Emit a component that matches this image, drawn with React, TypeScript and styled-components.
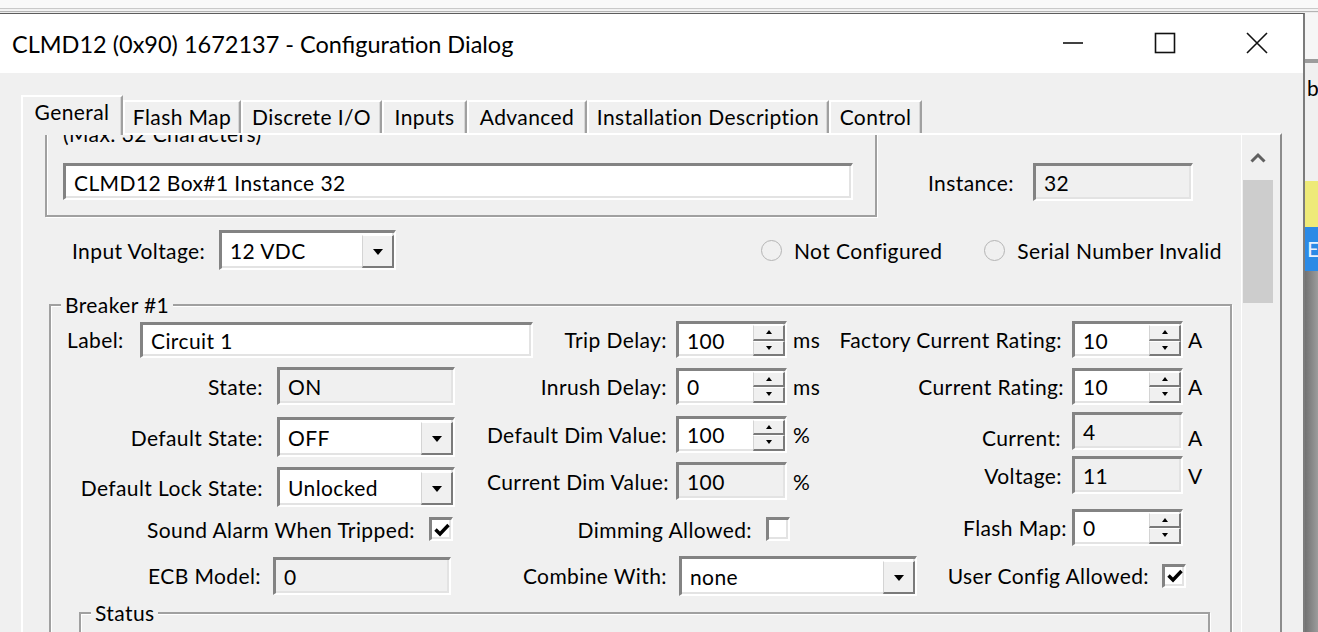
import { useLayoutEffect, useRef } from 'react';
import styled, { createGlobalStyle } from 'styled-components';

const GlobalStyle = createGlobalStyle`
	html, body {
		margin: 0;
		padding: 0;
		background: #f0f0f0;
	}
	body {
		font-family: 'Segoe UI', Lato, sans-serif;
		font-size: 21px;
		letter-spacing: 0.4px;
		color: #000;
	}
	* {
		box-sizing: border-box;
	}
`;

const Screen = styled.div`
	width: 1318px;
	height: 632px;
	overflow: hidden;
	display: flex;
	flex-direction: column;
`;

const TopStrip = styled.div`
	height: 13px;
	flex: none;
	background: linear-gradient(#f9f9f9 0 8px, #c9c9c9 8px 9px, #f2f2f2 9px 11px, #b4b4b4 11px 12px, #ececec 12px);
`;

const Main = styled.div`
	flex: 1;
	min-height: 0;
	display: flex;
`;

const Dialog = styled.div`
	width: 1305px;
	flex: none;
	display: flex;
	flex-direction: column;
	background: #f0f0f0;
	border-top: 1px solid #5c5c5c;
	border-right: 2px solid #7c7c7c;
`;

const TitleBar = styled.div`
	height: 59px;
	flex: none;
	display: flex;
	align-items: center;
	background: #fff;
`;

const Title = styled.div`
	flex: 1;
	padding-left: 12px;
	font-size: 23.5px;
	letter-spacing: 0;
	white-space: nowrap;
`;

const WinButton = styled.div`
	width: 92px;
	height: 100%;
	display: flex;
	align-items: center;
	justify-content: center;
	padding-bottom: 2px;
`;

const Body = styled.div`
	flex: 1;
	min-height: 0;
	display: flex;
	flex-direction: column;
	padding: 22px 21px 0 21px;
`;

const TabStrip = styled.div`
	height: 40px;
	flex: none;
	display: flex;
	align-items: flex-end;
	margin-bottom: -2px;
	position: relative;
	z-index: 1;
`;

const Tab = styled.div<{ $active?: boolean; $w: number }>`
	width: ${(p) => p.$w}px;
	height: ${(p) => (p.$active ? 40 : 33)}px;
	margin-bottom: ${(p) => (p.$active ? 0 : 2)}px;
	padding-top: 3px;
	display: flex;
	justify-content: center;
	line-height: 24px;
	white-space: nowrap;
	background: #f0f0f0;
	border-top: 2px solid #fff;
	border-left: 2px solid #fff;
	border-right: 2px solid #a0a0a0;
	box-shadow: inset -1px 0 0 #d6d6d6;
`;

const Panel = styled.div`
	flex: 1;
	min-height: 0;
	display: flex;
	border-top: 2px solid #fff;
	border-left: 2px solid #fff;
	border-right: 2px solid #8c8c8c;
`;

const Viewport = styled.div`
	flex: 1;
	min-width: 0;
	overflow: hidden;
`;

const ScrollBar = styled.div`
	width: 39px;
	flex: none;
	display: flex;
	flex-direction: column;
	border-left: 1px solid #fff;
	padding: 0 7px 0 1px;
`;

const ScrollUp = styled.div`
	height: 45px;
	display: flex;
	align-items: center;
	justify-content: center;
`;

const ScrollThumb = styled.div`
	height: 123px;
	background: #cdcdcd;
`;

const Content = styled.div`
	padding-top: 20px;
	padding-bottom: 40px;
`;

const TopRow = styled.div`
	display: flex;
	align-items: flex-end;
	padding-left: 22px;
`;

const PlainGroup = styled.div`
	width: 832px;
	border: 2px solid #a0a0a0;
	box-shadow: inset 1px 1px 0 #fff, 1px 1px 0 #fff;
	padding: 11px 22px 15px 16px;
`;

const Hint = styled.div`
	line-height: 26px;
	margin-bottom: 16px;
`;

const InlineField = styled.div<{ $ml: number; $mb?: number }>`
	display: flex;
	align-items: center;
	margin-left: ${(p) => p.$ml}px;
	margin-bottom: ${(p) => p.$mb ?? 0}px;
`;

const Sunken = styled.div<{ $w: number; $h?: number; $ro?: boolean; $ml?: number }>`
	width: ${(p) => p.$w}px;
	height: ${(p) => p.$h ?? 37}px;
	margin-left: ${(p) => p.$ml ?? 0}px;
	flex: none;
	display: flex;
	align-items: center;
	background: ${(p) => (p.$ro ? '#f0f0f0' : '#fff')};
	border-style: solid;
	border-width: 3px 2px 2px 3px;
	border-color: #838383 #fff #fff #838383;
	box-shadow: inset -2px -2px 0 #e3e3e3;
`;

const FieldText = styled.span`
	flex: 1;
	padding-left: 8px;
	white-space: nowrap;
	overflow: hidden;
`;

const Raised = styled.div`
	flex: 1;
	display: flex;
	align-items: center;
	justify-content: center;
	background: #f0f0f0;
	border-style: solid;
	border-width: 1px 2px 2px 1px;
	border-color: #fff #7a7a7a #7a7a7a #d4d4d4;
`;

const DropButton = styled(Raised)`
	flex: none;
	width: 32px;
	align-self: stretch;
	margin: 2px 0 0 0;
	padding-top: 2px;
`;

const SpinColumn = styled.div`
	width: 32px;
	align-self: stretch;
	display: flex;
	flex-direction: column;
	margin-top: 1px;
`;

const Triangle = styled.span<{ $up?: boolean; $half: number; $tall: number }>`
	width: 0;
	height: 0;
	border-left: ${(p) => p.$half}px solid transparent;
	border-right: ${(p) => p.$half}px solid transparent;
	${(p) => (p.$up ? 'border-bottom' : 'border-top')}: ${(p) => p.$tall}px solid #000;
`;

const TextLabel = styled.span<{ $w?: number }>`
	white-space: nowrap;
	${(p) => (p.$w ? `width: ${p.$w}px; flex: none;` : '')}
`;

const VoltageRow = styled.div`
	display: flex;
	align-items: center;
	margin-top: 13px;
	padding-left: 49px;
`;

const Radios = styled.div`
	display: flex;
	align-items: center;
	gap: 42px;
	margin-left: 365px;
`;

const RadioItem = styled.div`
	display: flex;
	align-items: center;
	gap: 12px;
	white-space: nowrap;
`;

const RadioDot = styled.span`
	width: 21px;
	height: 21px;
	border-radius: 50%;
	border: 1.5px solid #b4b4b4;
	flex: none;
`;

const GroupBox = styled.fieldset<{ $w: number; $ml: number; $mt?: number; $minH?: number }>`
	width: ${(p) => p.$w}px;
	margin: ${(p) => p.$mt ?? 0}px 0 0 ${(p) => p.$ml}px;
	min-height: ${(p) => p.$minH ?? 0}px;
	padding: 0 0 16px 16px;
	border: 2px solid #a0a0a0;
	box-shadow: inset 1px 1px 0 #fff, 1px 1px 0 #fff;
	min-width: 0;
`;

const Legend = styled.legend<{ $lh: number }>`
	padding: 0 4px;
	margin-left: -6px;
	line-height: ${(p) => p.$lh}px;
	background: #f0f0f0;
`;

const FormGrid = styled.div`
	display: grid;
	grid-template-columns: 210px 178px 221px 111px 45px 240px 111px 27px;
	grid-template-rows: 45px 48px 54px 46px 38px 55px;
	align-items: center;
`;

const Cell = styled.div<{ $col: string; $end?: boolean; $lift?: number; $pr?: number }>`
	grid-column: ${(p) => p.$col};
	display: flex;
	align-items: center;
	justify-content: ${(p) => (p.$end ? 'flex-end' : 'flex-start')};
	margin-bottom: ${(p) => p.$lift ?? 0}px;
	padding-right: ${(p) => p.$pr ?? 0}px;
	white-space: nowrap;
`;

const Unit = styled.span<{ $pl: number; $lift?: number }>`
	padding-left: ${(p) => p.$pl}px;
	margin-bottom: ${(p) => p.$lift ?? 0}px;
`;

const CheckBox = styled(Sunken)<{ $mr: number }>`
	justify-content: center;
	margin-right: ${(p) => p.$mr}px;
`;

const SideApp = styled.div`
	flex: 1;
	display: flex;
	flex-direction: column;
	overflow: hidden;
`;

const SideBlock = styled.div<{ $h?: number; $bg: string; $fg?: string; $lh?: number }>`
	height: ${(p) => (p.$h ? `${p.$h}px` : 'auto')};
	flex: ${(p) => (p.$h ? 'none' : '1')};
	background: ${(p) => p.$bg};
	color: ${(p) => p.$fg ?? '#000'};
	padding-left: 2px;
	line-height: ${(p) => p.$lh ?? p.$h ?? 20}px;
	overflow: hidden;
`;

const tabs = [
	{ name: 'General', w: 102 },
	{ name: 'Flash Map', w: 118 },
	{ name: 'Discrete I/O', w: 141 },
	{ name: 'Inputs', w: 85 },
	{ name: 'Advanced', w: 120 },
	{ name: 'Installation Description', w: 242 },
	{ name: 'Control', w: 93 },
];

function Combo({ value, w, ml }: { value: string; w: number; ml?: number }) {
	return (
		<Sunken $w={w} $h={40} $ml={ml}>
			<FieldText>{value}</FieldText>
			<DropButton>
				<Triangle $half={5.5} $tall={6} />
			</DropButton>
		</Sunken>
	);
}

function Spin({ value }: { value: string }) {
	return (
		<Sunken $w={111}>
			<FieldText>{value}</FieldText>
			<SpinColumn>
				<Raised>
					<Triangle $up $half={3.5} $tall={4} />
				</Raised>
				<Raised>
					<Triangle $half={3.5} $tall={4} />
				</Raised>
			</SpinColumn>
		</Sunken>
	);
}

function Check({ checked, ml, mr = 2 }: { checked?: boolean; ml: number; mr?: number }) {
	return (
		<CheckBox $w={24} $h={24} $ml={ml} $mr={mr}>
			{checked ? (
				<svg width='16' height='14' viewBox='0 0 16 14'>
					<path d='M1.5 6.5 L6 11 L14.5 2' fill='none' stroke='#000' strokeWidth='3.4' />
				</svg>
			) : null}
		</CheckBox>
	);
}

function Field({ value, w, ro, ml }: { value: string; w: number; ro?: boolean; ml?: number }) {
	return (
		<Sunken $w={w} $h={38} $ro={ro} $ml={ml}>
			<FieldText>{value}</FieldText>
		</Sunken>
	);
}

function App() {
	const viewRef = useRef<HTMLDivElement>(null);

	useLayoutEffect(function scrollToSaved() {
		if (viewRef.current) {
			viewRef.current.scrollTop = 47;
		}
	}, []);

	return (
		<Screen>
			<GlobalStyle />
			<TopStrip />
			<Main>
				<Dialog>
					<TitleBar>
						<Title>CLMD12 (0x90) 1672137 - Configuration Dialog</Title>
						<WinButton>
							<svg width='22' height='4' viewBox='0 0 22 4'>
								<line x1='1' y1='2' x2='21' y2='2' stroke='#111' strokeWidth='1.6' />
							</svg>
						</WinButton>
						<WinButton>
							<svg width='22' height='22' viewBox='0 0 22 22'>
								<rect x='1.5' y='1.5' width='19' height='19' fill='none' stroke='#111' strokeWidth='1.6' />
							</svg>
						</WinButton>
						<WinButton>
							<svg width='22' height='22' viewBox='0 0 22 22'>
								<path d='M1 1 L21 21 M21 1 L1 21' stroke='#111' strokeWidth='1.6' />
							</svg>
						</WinButton>
					</TitleBar>

					<Body>
						<TabStrip>
							{tabs.map((t, i) => (
								<Tab key={t.name} $w={t.w} $active={i === 0}>
									{t.name}
								</Tab>
							))}
						</TabStrip>

						<Panel>
							<Viewport ref={viewRef}>
								<Content>
									<TopRow>
										<PlainGroup>
											<Hint>(Max: 32 Characters)</Hint>
											<Sunken $w={790} $h={37}>
												<FieldText>CLMD12 Box#1 Instance 32</FieldText>
											</Sunken>
										</PlainGroup>
										<InlineField $ml={51} $mb={16}>
											<TextLabel $w={105}>Instance:</TextLabel>
											<Field value='32' w={160} ro />
										</InlineField>
									</TopRow>

									<VoltageRow>
										<TextLabel $w={147}>Input Voltage:</TextLabel>
										<Combo value='12 VDC' w={177} />
										<Radios>
											<RadioItem>
												<RadioDot />
												Not Configured
											</RadioItem>
											<RadioItem>
												<RadioDot />
												Serial Number Invalid
											</RadioItem>
										</Radios>
									</VoltageRow>

									<GroupBox $w={1183} $ml={26} $mt={23}>
										<Legend $lh={24}>Breaker #1</Legend>
										<FormGrid>
											<Cell $col='1 / 4' $pr={9}>
												<TextLabel $w={73}>Label:</TextLabel>
												<Sunken $w={393} $h={36}>
													<FieldText>Circuit 1</FieldText>
												</Sunken>
												<TextLabel style={{ marginLeft: 'auto' }}>Trip Delay:</TextLabel>
											</Cell>
											<Cell $col='4'>
												<Spin value='100' />
											</Cell>
											<Unit $pl={6}>ms</Unit>
											<Cell $col='6' $end $pr={10}>
												Factory Current Rating:
											</Cell>
											<Cell $col='7'>
												<Spin value='10' />
											</Cell>
											<Unit $pl={5}>A</Unit>

											<Cell $col='1' $end $pr={14}>
												State:
											</Cell>
											<Cell $col='2'>
												<Field value='ON' w={178} ro />
											</Cell>
											<Cell $col='3' $end $pr={9}>
												Inrush Delay:
											</Cell>
											<Cell $col='4'>
												<Spin value='0' />
											</Cell>
											<Unit $pl={6}>ms</Unit>
											<Cell $col='6' $end $pr={8}>
												Current Rating:
											</Cell>
											<Cell $col='7'>
												<Spin value='10' />
											</Cell>
											<Unit $pl={5}>A</Unit>

											<Cell $col='1' $end $pr={14}>
												Default State:
											</Cell>
											<Cell $col='2'>
												<Combo value='OFF' w={178} />
											</Cell>
											<Cell $col='3' $end $pr={9} $lift={6}>
												Default Dim Value:
											</Cell>
											<Cell $col='4' $lift={6}>
												<Spin value='100' />
											</Cell>
											<Unit $pl={6} $lift={6}>
												%
											</Unit>
											<Cell $col='6' $end $pr={11}>
												Current:
											</Cell>
											<Cell $col='7' $lift={12}>
												<Field value='4' w={111} ro />
											</Cell>
											<Unit $pl={5}>A</Unit>

											<Cell $col='1' $end $pr={14}>
												Default Lock State:
											</Cell>
											<Cell $col='2'>
												<Combo value='Unlocked' w={178} />
											</Cell>
											<Cell $col='3' $end $pr={7} $lift={12}>
												Current Dim Value:
											</Cell>
											<Cell $col='4' $lift={12}>
												<Field value='100' w={111} ro />
											</Cell>
											<Unit $pl={6} $lift={12}>
												%
											</Unit>
											<Cell $col='6' $end $pr={10} $lift={24}>
												Voltage:
											</Cell>
											<Cell $col='7' $lift={24}>
												<Field value='11' w={111} ro />
											</Cell>
											<Unit $pl={5} $lift={24}>
												V
											</Unit>

											<Cell $col='1 / 3' $end>
												Sound Alarm When Tripped:
												<Check checked ml={14} />
											</Cell>
											<Cell $col='3 / 5' $end>
												Dimming Allowed:
												<Check ml={14} mr={-3} />
											</Cell>
											<Cell $col='6' $end $pr={5} $lift={4}>
												Flash Map:
											</Cell>
											<Cell $col='7' $lift={4}>
												<Spin value='0' />
											</Cell>

											<Cell $col='1' $end $pr={16}>
												ECB Model:
											</Cell>
											<Cell $col='2'>
												<Field value='0' w={178} ro ml={-4} />
											</Cell>
											<Cell $col='3' $end $pr={9}>
												Combine With:
											</Cell>
											<Cell $col='4 / 9'>
												<Combo value='none' w={238} ml={3} />
												<TextLabel style={{ marginLeft: 'auto' }}>User Config Allowed:</TextLabel>
												<Check checked ml={13} mr={24} />
											</Cell>
										</FormGrid>

										<GroupBox $w={1131} $ml={12} $minH={220}>
											<Legend $lh={20}>Status</Legend>
										</GroupBox>
									</GroupBox>
								</Content>
							</Viewport>

							<ScrollBar>
								<ScrollUp>
									<svg width='16' height='11' viewBox='0 0 16 11'>
										<path d='M1.5 9.5 L8 3 L14.5 9.5' fill='none' stroke='#606060' strokeWidth='3' />
									</svg>
								</ScrollUp>
								<ScrollThumb />
							</ScrollBar>
						</Panel>
					</Body>
				</Dialog>

				<SideApp>
					<SideBlock $h={46} $bg='#f6f6f6' />
					<SideBlock $h={4} $bg='#9c9c9c' />
					<SideBlock $h={118} $lh={50} $bg='#f0f0f0'>
						b
					</SideBlock>
					<SideBlock $h={46} $bg='#eeea78' />
					<SideBlock $h={44} $bg='#2b8ae6' $fg='#e8f2ff'>
						E
					</SideBlock>
					<SideBlock $bg='linear-gradient(90deg, #727272, #9c9c9c)' />
				</SideApp>
			</Main>
		</Screen>
	);
}

export default App;
